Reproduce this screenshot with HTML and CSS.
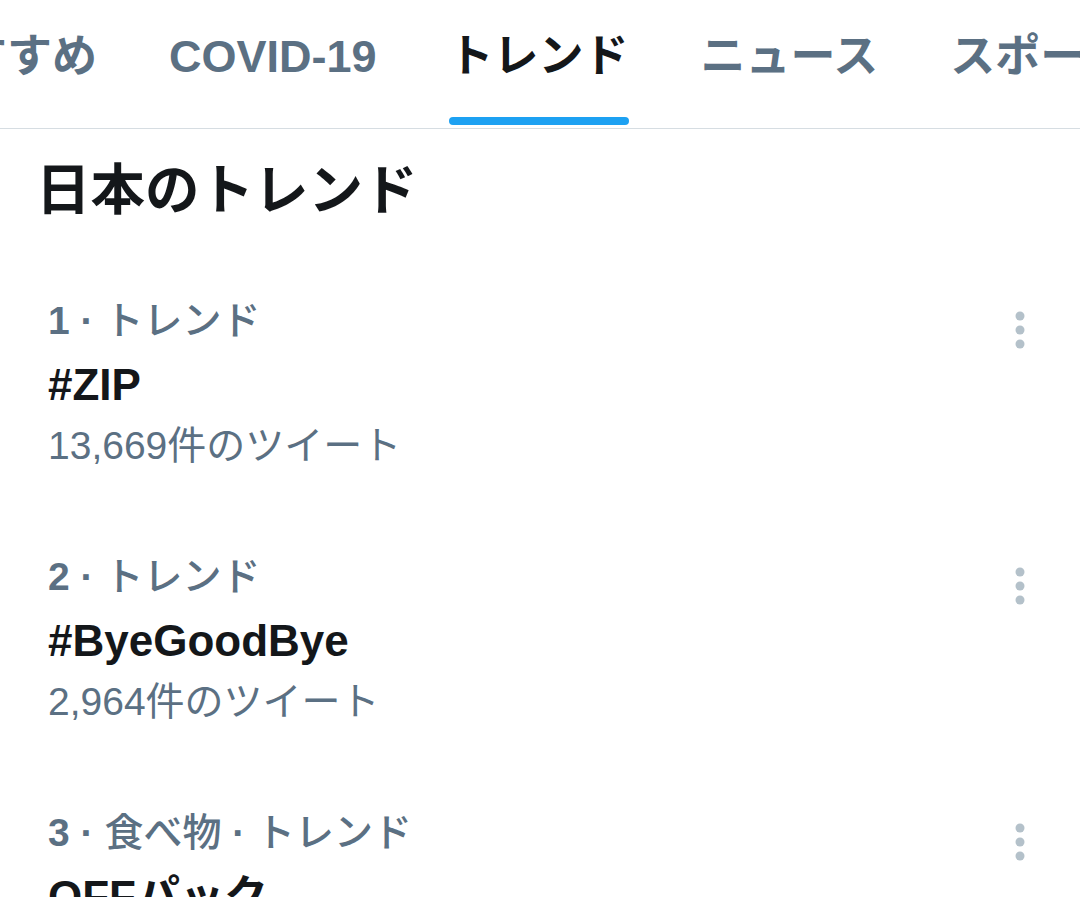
FILE: index.html
```html
<!DOCTYPE html>
<html lang="ja">
<head>
<meta charset="utf-8">
<title>トレンド</title>
<link rel="stylesheet" href="styles.css">
</head>
<body>
<div class="screen">
  <nav class="tabbar">
    <div class="tab-track">
      <div class="tab"><span class="tab-label">おすすめ</span><span class="tab-indicator"></span></div>
      <div class="tab"><span class="tab-label">COVID-19</span><span class="tab-indicator"></span></div>
      <div class="tab tab-active"><span class="tab-label">トレンド</span><span class="tab-indicator"></span></div>
      <div class="tab"><span class="tab-label">ニュース</span><span class="tab-indicator"></span></div>
      <div class="tab"><span class="tab-label">スポーツ</span><span class="tab-indicator"></span></div>
      <div class="tab"><span class="tab-label">エンタメ</span><span class="tab-indicator"></span></div>
    </div>
  </nav>

  <section class="section">
    <h1 class="section-title">日本のトレンド</h1>

    <div class="trend">
      <div class="trend-body">
        <div class="trend-meta"><span class="rank">1</span> · <span class="cat">トレンド</span></div>
        <div class="trend-name">#ZIP</div>
        <div class="trend-count">13,669件のツイート</div>
      </div>
      <button class="more" aria-label="その他">
        <svg viewBox="0 0 10 38" width="10" height="38"><circle cx="5" cy="5" r="4.5"/><circle cx="5" cy="19" r="4.5"/><circle cx="5" cy="33" r="4.5"/></svg>
      </button>
    </div>

    <div class="trend">
      <div class="trend-body">
        <div class="trend-meta"><span class="rank">2</span> · <span class="cat">トレンド</span></div>
        <div class="trend-name">#ByeGoodBye</div>
        <div class="trend-count">2,964件のツイート</div>
      </div>
      <button class="more" aria-label="その他">
        <svg viewBox="0 0 10 38" width="10" height="38"><circle cx="5" cy="5" r="4.5"/><circle cx="5" cy="19" r="4.5"/><circle cx="5" cy="33" r="4.5"/></svg>
      </button>
    </div>

    <div class="trend">
      <div class="trend-body">
        <div class="trend-meta"><span class="rank">3</span> · <span class="cat">食べ物</span> · <span class="cat">トレンド</span></div>
        <div class="trend-name">OFFパック</div>
        <div class="trend-count">1,204件のツイート</div>
      </div>
      <button class="more" aria-label="その他">
        <svg viewBox="0 0 10 38" width="10" height="38"><circle cx="5" cy="5" r="4.5"/><circle cx="5" cy="19" r="4.5"/><circle cx="5" cy="33" r="4.5"/></svg>
      </button>
    </div>
  </section>
</div>
</body>
</html>
```

FILE: styles.css
```css
html, body {
  margin: 0;
  padding: 0;
  background: #ffffff;
}

body {
  font-family: "Liberation Sans", "Noto Sans CJK JP", sans-serif;
  color: #14171a;
  overflow: hidden;
}

.screen {
  width: 1080px;
  height: 897px;
  overflow: hidden;
}

/* ---------- tabs ---------- */
.tabbar {
  height: 128px;
  border-bottom: 1px solid #d6dde2;
  overflow: hidden;
}

.tab-track {
  display: flex;
  margin-left: -119px;
  white-space: nowrap;
}

.tab {
  flex: none;
  display: flex;
  flex-direction: column;
  align-items: stretch;
  padding: 27px 36px 0;
  height: 101px;
}

.tab-label {
  font-size: 45px;
  line-height: 60px;
  font-weight: 700;
  color: #5b7083;
}

.tab-indicator {
  height: 8px;
  margin-top: 30px;
  border-radius: 4px;
  background: transparent;
}

.tab-active .tab-label {
  color: #14171a;
}

.tab-active .tab-indicator {
  background: #1da1f2;
}

/* ---------- section ---------- */
.section-title {
  margin: 26px 0 0;
  padding: 0 40px 27px 36px;
  font-size: 54.5px;
  line-height: 72px;
  font-weight: 700;
  color: #14171a;
}

.trend {
  display: flex;
  align-items: flex-start;
  padding: 39px 55px 39px 48px;
}

.trend-body {
  flex: 1;
  min-width: 0;
}

.trend-meta {
  font-size: 39px;
  line-height: 56px;
  font-weight: 700;
  color: #5b7083;
  white-space: nowrap;
}

.trend-meta .cat {
  font-weight: 500;
}

.trend-name {
  font-size: 44px;
  line-height: 72px;
  font-weight: 700;
  color: #14171a;
  white-space: nowrap;
}

.trend-count {
  font-size: 39px;
  line-height: 50px;
  font-weight: 400;
  color: #5b7083;
  white-space: nowrap;
}

.more {
  flex: none;
  margin-top: 18px;
  padding: 0;
  border: 0;
  background: none;
  width: 10px;
  height: 38px;
  display: block;
}

.more svg {
  display: block;
  fill: #b4c1ca;
}
```
